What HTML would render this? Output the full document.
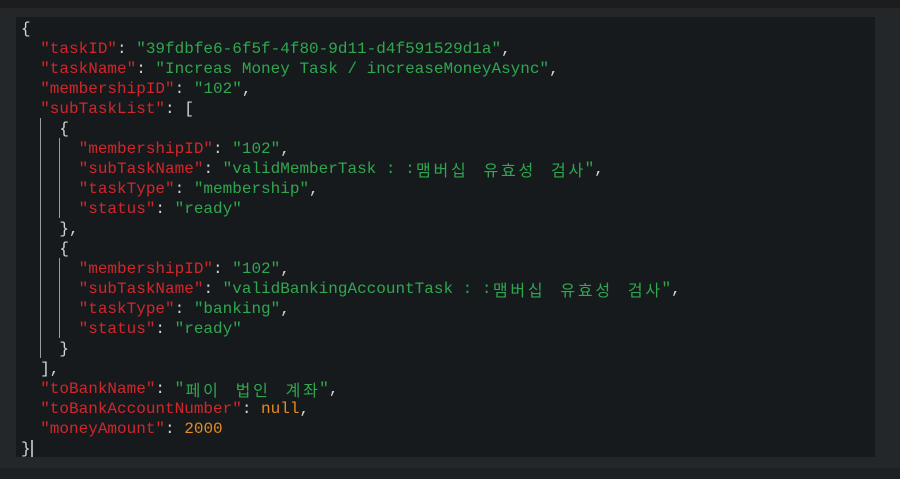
<!DOCTYPE html>
<html><head><meta charset="utf-8"><style>
html,body{margin:0;padding:0}
body{width:900px;height:479px;background:#1e2124;position:relative;overflow:hidden}
.top{position:absolute;left:0;top:0;width:900px;height:8px;background:#1b1d1f}
.band{position:absolute;left:0;top:8px;width:900px;height:460px;background:#24272a}
.panel{position:absolute;left:16px;top:17px;width:859px;height:440px;background:#171a1d}
pre{position:absolute;left:21px;top:19px;margin:0;font-family:"Liberation Mono","Noto Sans CJK KR",monospace;font-size:16px;line-height:20px;color:#d4d4d4}
.k{color:#d2262b}.s{color:#2ea74f}.n{color:#e88b1f}
.h i{font-style:normal;display:inline-block;width:17.5px;text-align:center;font-family:"Noto Sans CJK KR","NanumGothic",sans-serif;font-size:16px;line-height:20px;vertical-align:top}
.h b{display:inline-block;width:15px}
.g{position:absolute;width:1px;background:#9a9a9a}
.cur{position:absolute;left:31px;top:440px;width:2px;height:17px;background:#aaa}
</style></head><body>
<div class="top"></div><div class="band"></div><div class="panel"></div>
<div class="g" style="left:40px;top:118px;height:240px"></div>
<div class="g" style="left:59px;top:138px;height:80px"></div>
<div class="g" style="left:59px;top:258px;height:80px"></div>
<div class="cur"></div>
<pre>{
  <span class="k">"taskID"</span>: <span class="s">"39fdbfe6-6f5f-4f80-9d11-d4f591529d1a"</span>,
  <span class="k">"taskName"</span>: <span class="s">"Increas Money Task / increaseMoneyAsync"</span>,
  <span class="k">"membershipID"</span>: <span class="s">"102"</span>,
  <span class="k">"subTaskList"</span>: [
    {
      <span class="k">"membershipID"</span>: <span class="s">"102"</span>,
      <span class="k">"subTaskName"</span>: <span class="s">"validMemberTask : :<span class="h"><i>맴</i><i>버</i><i>십</i><b></b><i>유</i><i>효</i><i>성</i><b></b><i>검</i><i>사</i></span>"</span>,
      <span class="k">"taskType"</span>: <span class="s">"membership"</span>,
      <span class="k">"status"</span>: <span class="s">"ready"</span>
    },
    {
      <span class="k">"membershipID"</span>: <span class="s">"102"</span>,
      <span class="k">"subTaskName"</span>: <span class="s">"validBankingAccountTask : :<span class="h"><i>맴</i><i>버</i><i>십</i><b></b><i>유</i><i>효</i><i>성</i><b></b><i>검</i><i>사</i></span>"</span>,
      <span class="k">"taskType"</span>: <span class="s">"banking"</span>,
      <span class="k">"status"</span>: <span class="s">"ready"</span>
    }
  ],
  <span class="k">"toBankName"</span>: <span class="s">"<span class="h"><i>페</i><i>이</i><b></b><i>법</i><i>인</i><b></b><i>계</i><i>좌</i></span>"</span>,
  <span class="k">"toBankAccountNumber"</span>: <span class="n">null</span>,
  <span class="k">"moneyAmount"</span>: <span class="n">2000</span>
}</pre>
</body></html>
